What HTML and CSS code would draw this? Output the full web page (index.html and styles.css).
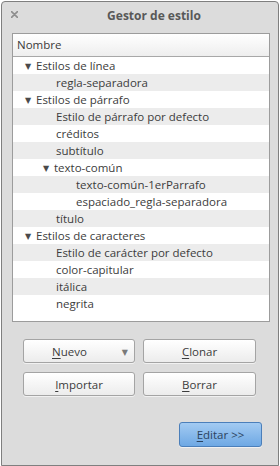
FILE: index.html
```html
<!DOCTYPE html>
<html lang="es">
<head>
    <meta charset="UTF-8">
    <title>Gestor de estilo</title>
    <link rel="stylesheet" href="styles.css">
</head>
<body>
    <div class="window">
        <div class="titlebar">
            <svg class="close" width="7" height="7" viewBox="0 0 7 7">
                <path d="M0.5 0.5 L6.5 6.5 M6.5 0.5 L0.5 6.5" stroke="#8e8e8e" stroke-width="1.6" stroke-linecap="round"/>
            </svg>
            <span class="title">Gestor de estilo</span>
        </div>

        <!-- Árbol de estilos -->
        <div class="list">
            <div class="list-header">Nombre</div>
            <div class="row lvl0"><span class="tri">&#9660;</span>Estilos de línea</div>
            <div class="row lvl1">regla-separadora</div>
            <div class="row lvl0"><span class="tri">&#9660;</span>Estilos de párrafo</div>
            <div class="row lvl1">Estilo de párrafo por defecto</div>
            <div class="row lvl1">créditos</div>
            <div class="row lvl1">subtítulo</div>
            <div class="row lvl1b"><span class="tri">&#9660;</span>texto-común</div>
            <div class="row lvl2">texto-común-1erParrafo</div>
            <div class="row lvl2">espaciado_regla-separadora</div>
            <div class="row lvl1">título</div>
            <div class="row lvl0"><span class="tri">&#9660;</span>Estilos de caracteres</div>
            <div class="row lvl1">Estilo de carácter por defecto</div>
            <div class="row lvl1">color-capitular</div>
            <div class="row lvl1">itálica</div>
            <div class="row lvl1">negrita</div>
        </div>

        <div class="actions">
            <button class="btn btn-menu"><span><u>N</u>uevo</span><span class="arrow">&#9660;</span></button>
            <button class="btn"><u>C</u>lonar</button>
            <button class="btn"><u>I</u>mportar</button>
            <button class="btn"><u>B</u>orrar</button>
        </div>

        <div class="footer">
            <button class="btn btn-primary"><u>E</u>ditar &gt;&gt;</button>
        </div>
    </div>
</body>
</html>
```

FILE: styles.css
```css
/* Base */
* {
    margin: 0;
    padding: 0;
    box-sizing: border-box;
}

body {
    background: #ffffff;
    font-family: 'Open Sans', 'DejaVu Sans', sans-serif;
    font-size: 11.5px;
    color: #3c3c3c;
}

.window {
    width: 278px;
    height: 465px;
    margin: 1px 0 0 1px;
    border: 1px solid #7f7f7f;
    border-radius: 4px 4px 0 0;
    background: #dcdcdc;
    display: flex;
    flex-direction: column;
}

/* Barra de título */
.titlebar {
    height: 31px;
    display: flex;
    align-items: center;
    padding: 0 0 4px 9px;
}

.close {
    flex: none;
    margin-top: -2px;
}

.title {
    flex: 1;
    text-align: center;
    font-size: 12px;
    font-weight: bold;
    color: #585858;
    padding-left: 12px;
}

/* Lista */
.list {
    margin: 0 8px 0 10px;
    height: 289px;
    background: #ffffff;
    border: 1px solid #9c9c9c;
}

.list-header {
    height: 23px;
    line-height: 22px;
    padding-left: 4px;
    color: #3a3a3a;
    background: linear-gradient(#ffffff, #eeeeee);
    border-bottom: 1px solid #a8a8a8;
}

.row {
    height: 17px;
    line-height: 17px;
    white-space: nowrap;
}

.row:nth-child(odd) {
    background: #ececec;
}

.tri {
    display: inline-block;
    width: 11px;
    font-size: 8px;
    color: #4a4a4a;
    vertical-align: 1px;
}

.lvl0 { padding-left: 12px; }
.lvl1 { padding-left: 43px; }
.lvl1b { padding-left: 30px; }
.lvl2 { padding-left: 63px; }

/* Botones */
.actions {
    display: grid;
    grid-template-columns: 112px 113px;
    gap: 9px 8px;
    margin: 17px 0 0 21px;
}

.btn {
    height: 24px;
    font-family: inherit;
    font-size: 11.5px;
    color: #3c3c3c;
    background: linear-gradient(#ffffff, #ececec);
    border: 1px solid #a4a4a4;
    border-radius: 3px;
    box-shadow: 0 1px 0 rgba(255, 255, 255, 0.6);
}

.btn u {
    text-decoration-thickness: 1px;
    text-underline-offset: 2px;
}

.btn-menu {
    display: flex;
    align-items: center;
    padding: 0 6px 0 28px;
    justify-content: space-between;
}

.btn-menu .arrow {
    font-size: 8px;
    color: #7a7a7a;
}

.footer {
    display: flex;
    justify-content: flex-end;
    margin: 26px 16px 0 0;
}

.btn-primary {
    width: 83px;
    height: 25px;
    color: #2b4360;
    background: linear-gradient(#a3cbf2, #6ea8e4);
    border-color: #4b7fba;
}
```
